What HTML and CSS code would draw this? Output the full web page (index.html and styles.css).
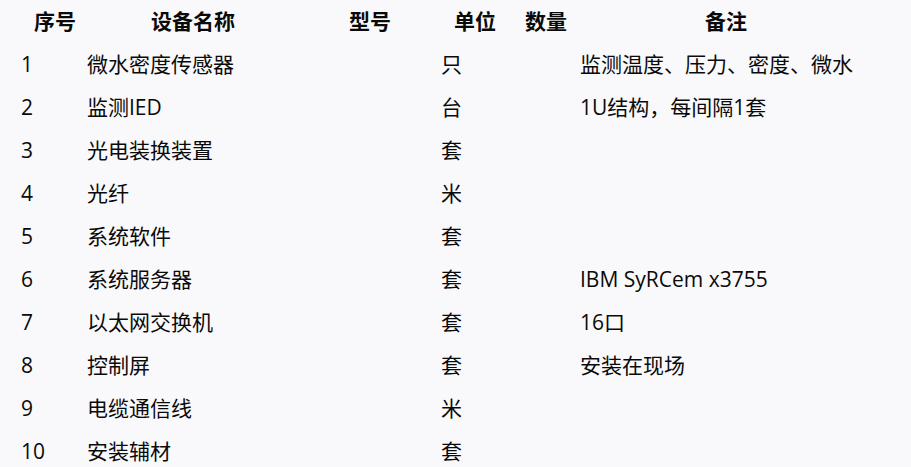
FILE: index.html
```html
<!DOCTYPE html>
<html lang="zh-CN">
<head>
<meta charset="utf-8">
<title>设备清单</title>
<link rel="stylesheet" href="styles.css">
</head>
<body>
<table class="equip">
  <colgroup>
    <col class="c-no"><col class="c-name"><col class="c-model"><col class="c-unit"><col class="c-qty"><col class="c-note">
  </colgroup>
  <thead>
    <tr><th class="th-no">序号</th><th>设备名称</th><th>型号</th><th>单位</th><th>数量</th><th>备注</th></tr>
  </thead>
  <tbody>
    <tr><td>1</td><td>微水密度传感器</td><td></td><td>只</td><td></td><td>监测温度、压力、密度、微水</td></tr>
    <tr><td>2</td><td>监测IED</td><td></td><td>台</td><td></td><td>1U结构，每间隔1套</td></tr>
    <tr><td>3</td><td>光电装换装置</td><td></td><td>套</td><td></td><td></td></tr>
    <tr><td>4</td><td>光纤</td><td></td><td>米</td><td></td><td></td></tr>
    <tr><td>5</td><td>系统软件</td><td></td><td>套</td><td></td><td></td></tr>
    <tr><td>6</td><td>系统服务器</td><td></td><td>套</td><td></td><td>IBM SyRCem x3755</td></tr>
    <tr><td>7</td><td>以太网交换机</td><td></td><td>套</td><td></td><td>16口</td></tr>
    <tr><td>8</td><td>控制屏</td><td></td><td>套</td><td></td><td>安装在现场</td></tr>
    <tr><td>9</td><td>电缆通信线</td><td></td><td>米</td><td></td><td></td></tr>
    <tr><td>10</td><td>安装辅材</td><td></td><td>套</td><td></td><td></td></tr>
  </tbody>
</table>
</body>
</html>
```

FILE: styles.css
```css
html, body {
  margin: 0;
  padding: 0;
  background: #f9f9fb;
}
body {
  font-family: "Open Sans", "Noto Sans CJK SC", sans-serif;
  font-size: 21px;
  color: #0a0a0a;
}
.equip {
  margin-left: 13px;
  border-collapse: collapse;
  table-layout: fixed;
  width: 867px;
}
.c-no { width: 66px; }
.c-name { width: 228px; }
.c-model { width: 126px; }
.c-unit { width: 84px; }
.c-qty { width: 55px; }
.c-note { width: 308px; }
.equip th, .equip td {
  padding: 0 8px;
  height: 43px;
  line-height: 43px;
  white-space: nowrap;
  vertical-align: middle;
}
.equip th {
  font-weight: 700;
  text-align: center;
}
.equip td {
  text-align: left;
}
.equip .th-no {
  padding-left: 18px;
  padding-right: 0;
}
```
